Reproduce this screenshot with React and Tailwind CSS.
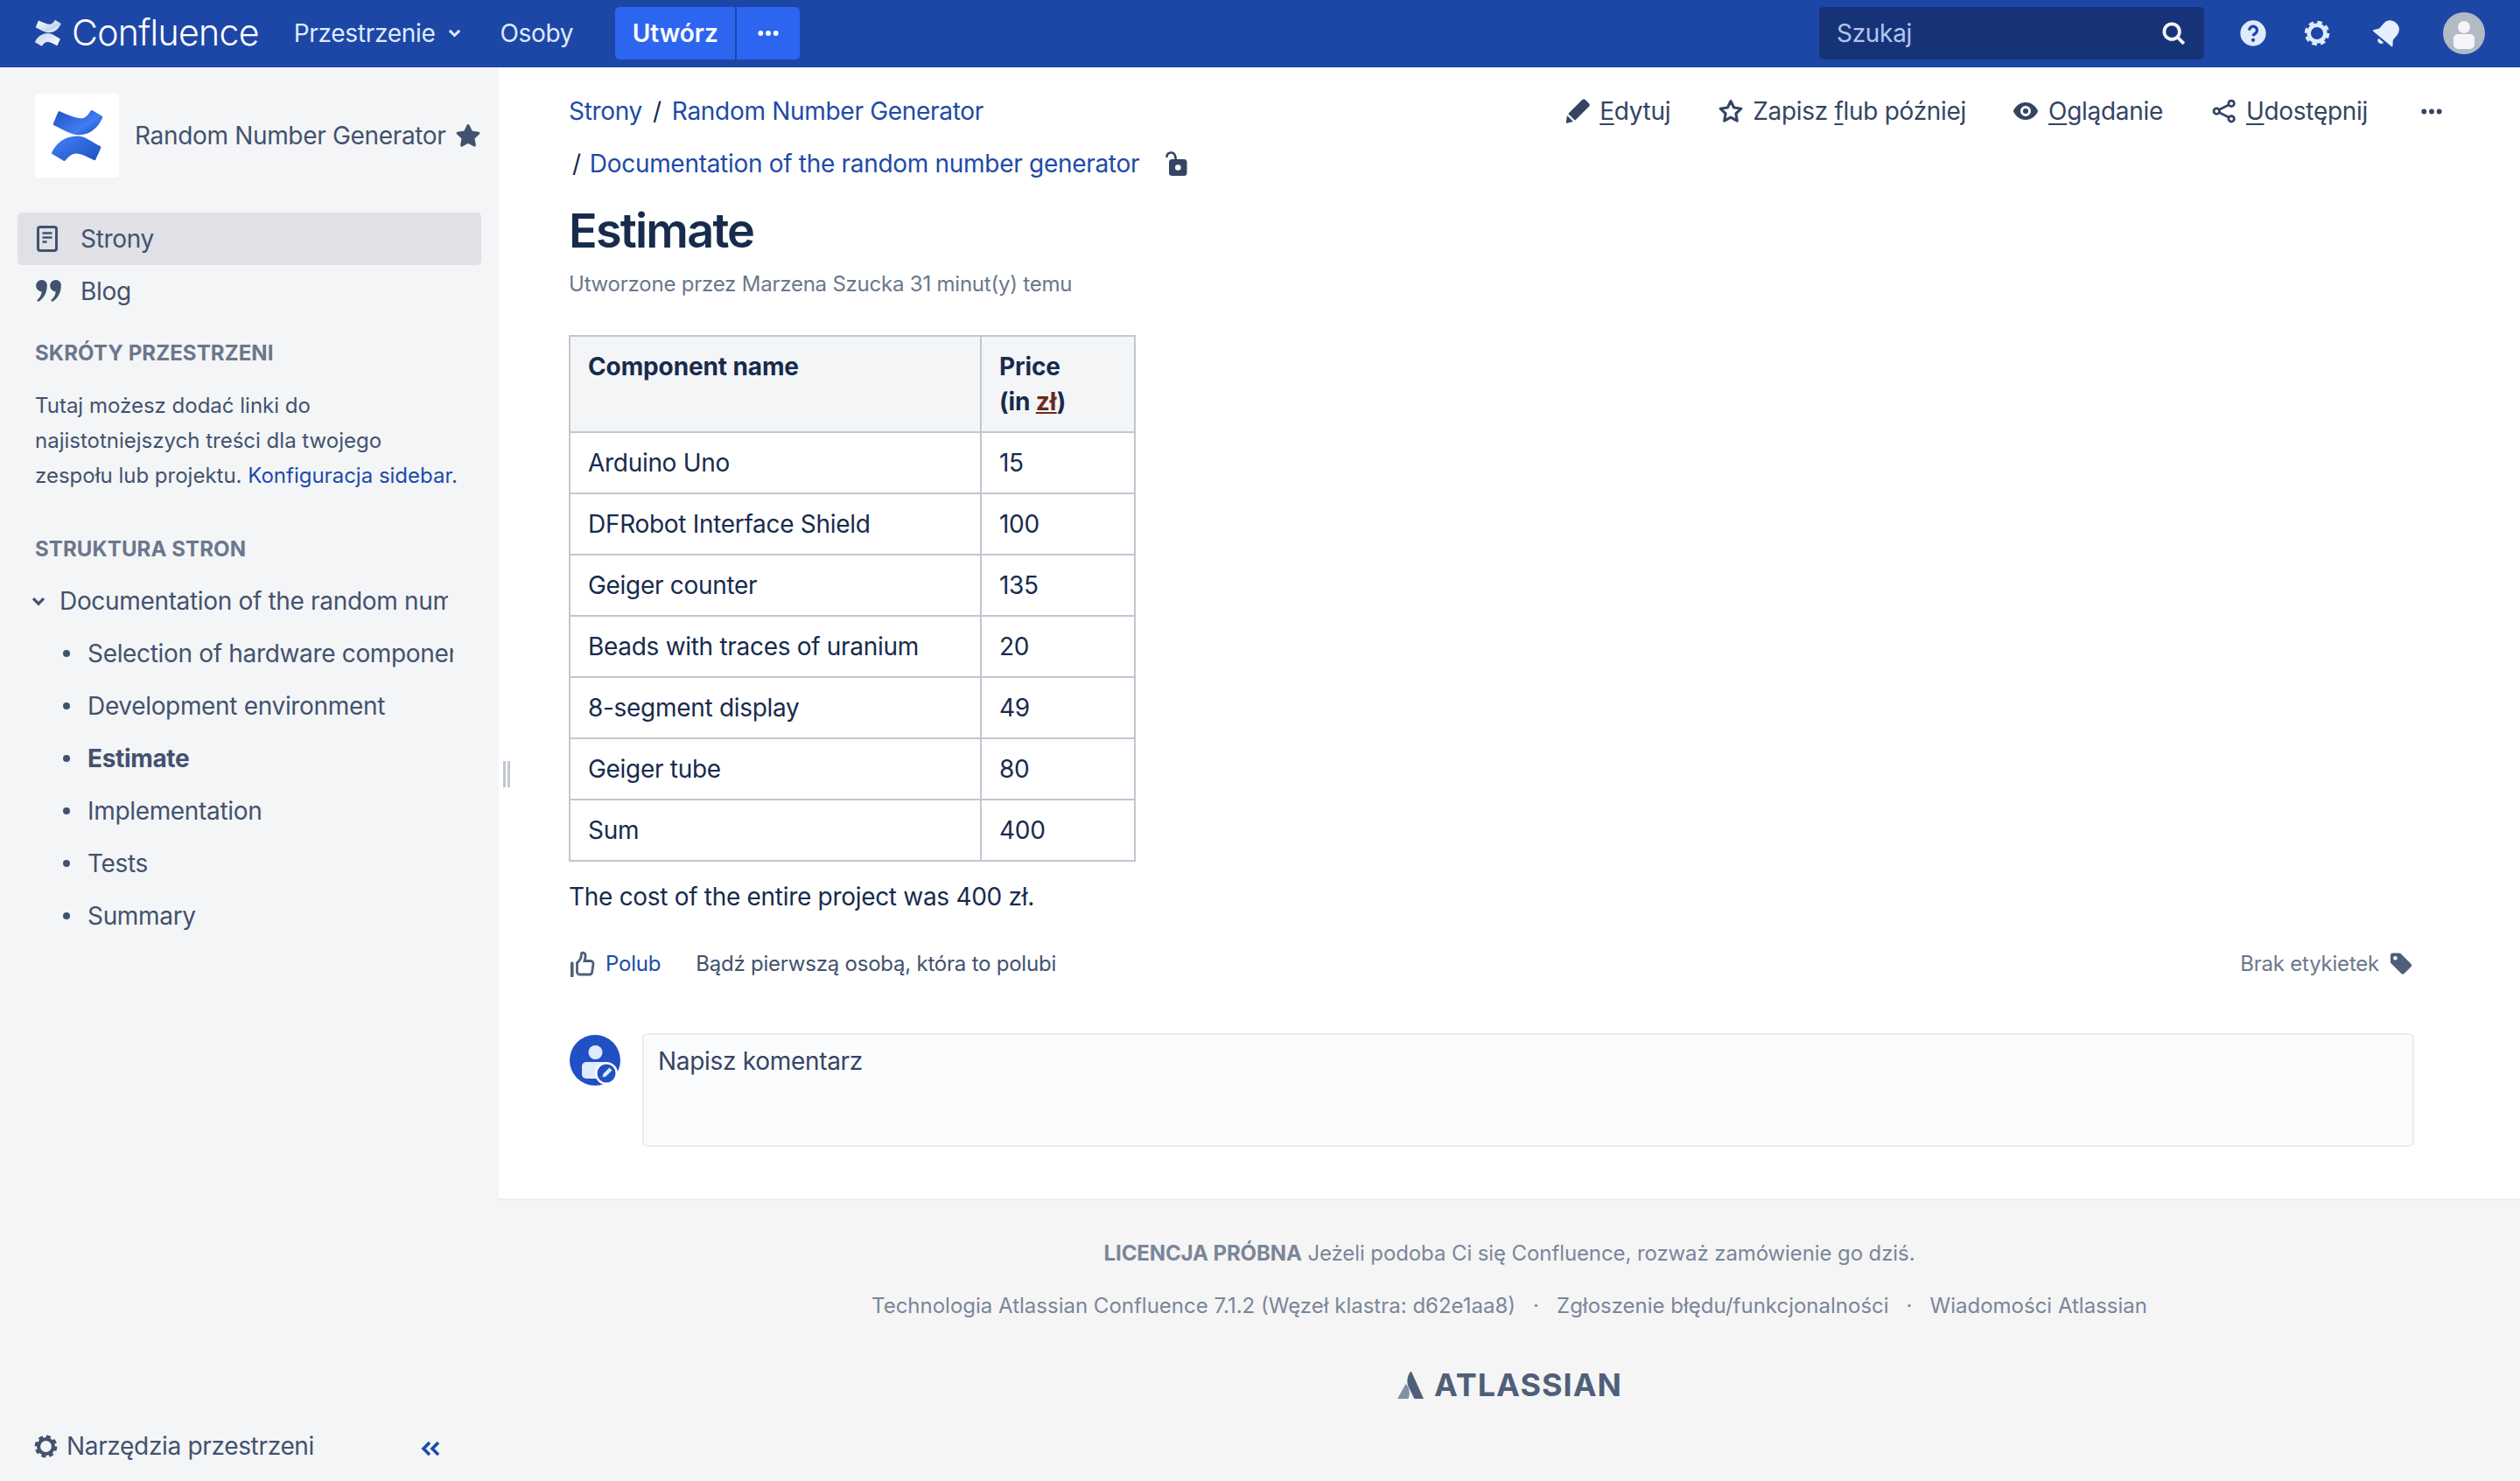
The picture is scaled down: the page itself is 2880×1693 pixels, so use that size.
import { useId } from "react";

const font = { fontFamily: "Inter, 'Noto Sans', sans-serif" };

function ConfluenceMark({ className, dark, light }) {
  const topId = useId();
  const bottomId = useId();
  return (
    <svg viewBox="50 50 190 190" className={className}>
      <defs>
        <linearGradient id={topId} x1="0" y1="0" x2="1" y2="0.8">
          <stop offset="0" stopColor={dark} />
          <stop offset="0.7" stopColor={light} />
          <stop offset="1" stopColor={dark} />
        </linearGradient>
        <linearGradient id={bottomId} x1="0" y1="0.2" x2="1" y2="1">
          <stop offset="0" stopColor={light} />
          <stop offset="1" stopColor={dark} />
        </linearGradient>
      </defs>
      <path
        fill={`url(#${topId})`}
        d="M84 60C110 72 140 84 158 84C172 84 182 72 190 58Q193 54 197 57L229 76Q233 79 231 83C216 115 190 141 150 141C122 141 95 122 64 108Q60 106 62 101L78 63Q80 58 84 60Z"
      />
      <path
        fill={`url(#${bottomId})`}
        d="M57 201C72 170 100 146 145 145C170 145 195 165 223 180Q227 182 226 186L208 226Q206 230 202 228C180 218 160 205 140 205C125 205 113 218 104 229Q101 233 97 230L58 207Q54 205 57 201Z"
      />
    </svg>
  );
}

function DotsIcon({ className }) {
  return (
    <svg viewBox="0 0 24 6" className={className} fill="currentColor">
      <circle cx="4" cy="3" r="2.7" />
      <circle cx="12" cy="3" r="2.7" />
      <circle cx="20" cy="3" r="2.7" />
    </svg>
  );
}

function GearIcon({ className }) {
  return (
    <svg viewBox="0 0 24 24" className={className} fill="none" stroke="currentColor">
      <circle cx="12" cy="12" r="7" strokeWidth="3.4" />
      <circle cx="12" cy="12" r="9.4" strokeWidth="2.6" strokeDasharray="4.2 3.18" />
    </svg>
  );
}

function PencilIcon({ className }) {
  return (
    <svg viewBox="0 0 24 24" className={className} fill="currentColor">
      <path d="M16.2 1.600a2 2 0 012.8 0l3.400 3.400a2 2 0 010 2.800L9.600 20.600 3.400 14.400zM2.400 16l5.600 5.600-5.800 1.400a.7.7 0 01-.8-.8z" />
    </svg>
  );
}

function StarIcon({ className, filled }) {
  return (
    <svg viewBox="0 0 24 24" className={className} fill={filled ? "currentColor" : "none"} stroke="currentColor" strokeWidth="2.4" strokeLinejoin="round">
      <path d="M12 2.800l2.900 6 6.600.900-4.800 4.600 1.200 6.600-5.900-3.200-5.900 3.200 1.200-6.600-4.800-4.600 6.600-.900z" />
    </svg>
  );
}

function EyeIcon({ className }) {
  return (
    <svg viewBox="0 0 24 24" className={className}>
      <path fill="currentColor" fillRule="evenodd" d="M12 4.500c5 0 9 3.600 10.600 7.500C21 15.900 17 19.500 12 19.500S3 15.900 1.400 12C3 8.100 7 4.500 12 4.500zM12 7.500a4.500 4.500 0 100 9 4.500 4.500 0 000-9z" />
      <circle cx="12" cy="12" r="2.300" fill="currentColor" />
    </svg>
  );
}

function ShareIcon({ className }) {
  return (
    <svg viewBox="0 0 24 24" className={className} fill="none" stroke="currentColor" strokeWidth="2.2">
      <circle cx="18.500" cy="5" r="2.600" />
      <circle cx="18.500" cy="19" r="2.600" />
      <circle cx="5" cy="12" r="2.600" />
      <path d="M7.300 10.800l9-4.600M7.300 13.200l9 4.600" />
    </svg>
  );
}

function HeaderIcons() {
  return (
    <div className="flex items-center">
      <svg viewBox="0 0 24 24" className="ml-[40px] h-[32px] w-[32px] text-[#deebff]">
        <circle cx="12" cy="12" r="11" fill="currentColor" />
        <path d="M8.800 9.500a3.300 3.300 0 116 1.800c-.8 1-2.400 1.500-2.800 3" fill="none" stroke="#1d47a6" strokeWidth="2.500" />
        <circle cx="12" cy="17.900" r="1.600" fill="#1d47a6" />
      </svg>
      <GearIcon className="ml-[41px] h-[32px] w-[32px] text-[#deebff]" />
      <svg viewBox="0 0 24 24" className="ml-[46px] h-[36px] w-[36px] text-[#e6eeff]" fill="currentColor">
        <g transform="rotate(40 12 12)">
          <path d="M12 1.500c4.500 0 6.800 3.200 6.800 7v4.500l2.700 3.600a.6.6 0 01-.5 1H3a.6.6 0 01-.5-1L5.200 13V8.500c0-3.800 2.300-7 6.800-7z" />
          <path d="M9.500 19h5a2.500 2.500 0 01-5 0z" />
        </g>
      </svg>
      <svg viewBox="0 0 48 48" className="ml-[46px] mr-[40px] h-[48px] w-[48px]">
        <circle cx="24" cy="24" r="24" fill="#b3bac5" />
        <circle cx="24" cy="17" r="7" fill="#f4f5f7" />
        <rect x="12" y="25" width="24" height="17" rx="5" fill="#f4f5f7" />
      </svg>
    </div>
  );
}

function TopBar() {
  return (
    <header className="flex h-[77px] items-center bg-[#1d47a6] pb-[2px] text-[28px] tracking-[-0.3px] text-[#deebff]">
      <ConfluenceMark className="ml-[39px] h-[32px] w-[32px]" dark="#ffffff" light="#c6d4f2" />
      <span className="ml-[11px] text-[41px] leading-none font-light tracking-[-0.7px] text-white">Confluence</span>
      <span className="ml-[40px]">Przestrzenie</span>
      <svg viewBox="0 0 12 8" className="ml-[15px] h-[10px] w-[15px]" fill="none" stroke="currentColor" strokeWidth="2.400">
        <path d="M1.500 1.500L6 6l4.500-4.500" />
      </svg>
      <span className="ml-[44px]">Osoby</span>
      <div className="ml-[48px] flex h-[60px] overflow-hidden rounded-[5px] bg-[#2c66f0] tracking-normal text-white">
        <span className="flex w-[137px] items-center justify-center font-semibold">Utwórz</span>
        <span className="flex w-[74px] items-center justify-center border-l-2 border-[#1d47a6]">
          <DotsIcon className="h-[8px] w-[26px]" />
        </span>
      </div>
      <div className="ml-auto flex h-[60px] w-[440px] items-center justify-between rounded-[5px] bg-[#173378] px-[20px] text-[#b3c6ef]">
        <span>Szukaj</span>
        <svg viewBox="0 0 24 24" className="h-[30px] w-[30px] text-[#f4f6fc]" fill="none" stroke="currentColor" strokeWidth="3">
          <circle cx="10.500" cy="10.500" r="7" />
          <path d="M15.500 15.500l6 6" />
        </svg>
      </div>
      <HeaderIcons />
    </header>
  );
}

function SideItem({ icon, label, active }) {
  return (
    <div className={"mx-[20px] flex h-[60px] w-[530px] items-center rounded-[5px] " + (active ? "bg-[#dfe1e6]" : "")}>
      <span className="flex w-[72px] justify-center pr-[4px]">{icon}</span>
      {label}
    </div>
  );
}

const childPages = ["Selection of hardware components", "Development environment", "Estimate", "Implementation", "Tests", "Summary"];

function Sidebar() {
  return (
    <aside className="flex w-[570px] shrink-0 flex-col bg-[#f4f5f7] pt-[30px] text-[28px] tracking-[-0.33px] text-[#42526e]">
      <div className="ml-[40px] flex items-center">
        <div className="flex h-[96px] w-[96px] items-center justify-center rounded-[4px] bg-white">
          <ConfluenceMark className="h-[63px] w-[63px]" dark="#1f4fc0" light="#3f7df2" />
        </div>
        <span className="ml-[18px]">Random Number Generator</span>
        <StarIcon className="ml-[10px] h-[30px] w-[30px]" filled />
      </div>
      <div className="mt-[40px]">
        <SideItem
          active
          label="Strony"
          icon={
            <svg viewBox="0 0 24 30" className="h-[30px] w-[24px]" fill="none" stroke="currentColor" strokeWidth="3">
              <rect x="1.500" y="1.500" width="21" height="27" rx="2.500" />
              <path d="M6.500 8.500h11M6.500 13.500h11M6.500 18.500h5" strokeWidth="2.500" />
            </svg>
          }
        />
        <SideItem
          label="Blog"
          icon={
            <svg viewBox="0 0 30 26" className="ml-[3px] h-[26px] w-[30px]" fill="currentColor">
              <path d="M7 0a6 6 0 015.800 6.500C12.800 15 8.500 22 2.500 25l-1.200-2C4.500 20.500 6.300 17 6.700 13.400A6.700 6.700 0 017 0zM23 0a6 6 0 015.800 6.500C28.800 15 24.500 22 18.500 25l-1.200-2c3.200-2.500 5-6 5.400-9.600A6.700 6.700 0 0123 0z" />
            </svg>
          }
        />
      </div>
      <h3 className="mt-[25px] ml-[40px] text-[24px] leading-[32px] font-bold tracking-[0.1px] text-[#6b778c]">SKRÓTY PRZESTRZENI</h3>
      <p className="mt-[24px] ml-[40px] w-[510px] text-[24px] leading-[40px] tracking-normal">
        Tutaj możesz dodać linki do
        <br />
        najistotniejszych treści dla twojego
        <br />
        zespołu lub projektu. <span className="text-[#1d4ba8]">Konfiguracja sidebar</span>.
      </p>
      <h3 className="mt-[48px] ml-[40px] text-[24px] leading-[32px] font-bold tracking-[0.1px] text-[#6b778c]">STRUKTURA STRON</h3>
      <div className="mt-[13px]">
        <div className="flex h-[60px] items-center pl-[36px]">
          <svg viewBox="0 0 12 8" className="h-[11px] w-[16px]" fill="none" stroke="currentColor" strokeWidth="2.400">
            <path d="M1.500 1.500L6 6l4.500-4.500" />
          </svg>
          <span className="ml-[16px] w-[444px] overflow-hidden whitespace-nowrap">Documentation of the random number generator</span>
        </div>
        {childPages.map((page) => (
          <div key={page} className="flex h-[60px] items-center pl-[72px]">
            <span className="h-[8px] w-[8px] rounded-full bg-[#42526e]" />
            <span className={"ml-[20px] w-[418px] overflow-hidden whitespace-nowrap " + (page === "Estimate" ? "font-bold" : "")}>{page}</span>
          </div>
        ))}
      </div>
      <div className="mt-auto mb-[20px] flex h-[40px] items-center pl-[38px]">
        <GearIcon className="h-[29px] w-[29px]" />
        <span className="ml-[9px]">Narzędzia przestrzeni</span>
        <svg viewBox="0 0 22 18" className="mt-[6px] ml-[122px] h-[18px] w-[22px] text-[#1d4ba8]" fill="none" stroke="currentColor" strokeWidth="3.600">
          <path d="M10 2L3 9l7 7M20 2l-7 7 7 7" />
        </svg>
      </div>
    </aside>
  );
}

function Action({ icon, first, rest, before, className }) {
  return (
    <span className={"flex items-center " + className}>
      {icon}
      <span className="ml-[10px]">
        {before}
        <span className="underline underline-offset-[4px]">{first}</span>
        {rest}
      </span>
    </span>
  );
}

const rows = [
  ["Arduino Uno", "15"],
  ["DFRobot Interface Shield", "100"],
  ["Geiger counter", "135"],
  ["Beads with traces of uranium", "20"],
  ["8-segment display", "49"],
  ["Geiger tube", "80"],
  ["Sum", "400"],
];

function PriceTable() {
  return (
    <table className="mt-[42px] w-[648px] table-fixed border-collapse border-2 border-[#c1c7d0] text-[28px] leading-[40px] text-[#172b4d]">
      <thead>
        <tr className="bg-[#f4f5f7] align-top tracking-[-0.12px]">
          <th className="w-[470px] border-2 border-[#c1c7d0] px-[20px] pt-[14px] pb-[14px] text-left font-bold">Component name</th>
          <th className="border-2 border-[#c1c7d0] px-[20px] pt-[14px] pb-[14px] text-left font-bold">
            Price
            <br />
            (in <span className="text-[#6b2a1a] underline">zł</span>)
          </th>
        </tr>
      </thead>
      <tbody>
        {rows.map(([name, price]) => (
          <tr key={name} className="h-[70px]">
            <td className="border-2 border-[#c1c7d0] px-[20px]">{name}</td>
            <td className="border-2 border-[#c1c7d0] px-[20px]">{price}</td>
          </tr>
        ))}
      </tbody>
    </table>
  );
}

function PageContent() {
  return (
    <div className="relative pt-[30px] pr-[121px] pb-[59px] pl-[80px] text-[28px] leading-[40px] tracking-[-0.3px]">
      <div className="flex justify-between">
        <div className="text-[#172b4d]">
          <span className="text-[#1d4ba8]">Strony</span>
          <span className="mx-[12px]">/</span>
          <span className="text-[#1d4ba8]">Random Number Generator</span>
        </div>
        <div className="mr-[-33px] flex items-center text-[#344563]">
          <Action icon={<PencilIcon className="h-[30px] w-[30px]" />} first="E" rest="dytuj" />
          <Action className="ml-[54px]" icon={<StarIcon className="h-[30px] w-[30px]" />} before="Zapisz " first="f" rest="lub później" />
          <Action className="ml-[52px]" icon={<EyeIcon className="h-[32px] w-[32px]" />} first="O" rest="glądanie" />
          <Action className="ml-[55px]" icon={<ShareIcon className="h-[30px] w-[30px]" />} first="U" rest="dostępnij" />
          <DotsIcon className="ml-[60px] h-[7px] w-[26px]" />
        </div>
      </div>
      <div className="mt-[20px] flex items-center text-[#172b4d]">
        <span className="ml-[4px]">/</span>
        <span className="ml-[10px] text-[#1d4ba8]">Documentation of the random number generator</span>
        <svg viewBox="10 10 28 34" className="ml-[28px] h-[34px] w-[28px] text-[#344563]">
          <rect x="16" y="22" width="20.500" height="19" rx="3.500" fill="currentColor" />
          <circle cx="26.300" cy="31.500" r="3.300" fill="#fff" />
          <path d="M13.500 19c.5-5.500 8.500-6.500 9.800 0l.4 3.500" fill="none" stroke="currentColor" strokeWidth="2.600" strokeLinecap="round" />
        </svg>
      </div>
      <h1 className="mt-[25px] text-[54px] leading-[64px] font-semibold tracking-[-1.8px] text-[#172b4d]">Estimate</h1>
      <p className="mt-[13px] text-[24px] leading-[32px] tracking-[-0.22px] text-[#6b778c]">Utworzone przez Marzena Szucka 31 minut(y) temu</p>
      <PriceTable />
      <p className="mt-[20px] text-[#172b4d]">The cost of the entire project was 400 zł.</p>
      <div className="mt-[37px] flex items-center text-[24px] tracking-[-0.22px]">
        <svg viewBox="0 0 28 30" className="ml-[2px] h-[30px] w-[28px] text-[#505f79]" fill="none" stroke="currentColor" strokeWidth="2.800">
          <path d="M1.800 14v14.500" strokeWidth="3.600" strokeLinecap="round" />
          <path d="M7.500 13.500c3-2 5-6 5-10.500 0-1.500 4-1.500 4.500 2 .3 2-.5 5-1 6.500h7a3 3 0 013 3.500l-1.400 9.500a3 3 0 01-3 2.500H10.500a3 3 0 01-3-3z" />
        </svg>
        <span className="ml-[12px] text-[#1d4ba8]">Polub</span>
        <span className="ml-[40px] text-[#42526e]">Bądź pierwszą osobą, która to polubi</span>
        <span className="ml-auto text-[#6b778c]">Brak etykietek</span>
        <svg viewBox="0 0 26 26" className="mr-[2px] ml-[12px] h-[26px] w-[26px] text-[#505f79]" fill="currentColor">
          <path fillRule="evenodd" d="M3 .500h8a3 3 0 012.100.900l11 11a3 3 0 010 4.200l-7 7a3 3 0 01-4.200 0l-11-11A3 3 0 011 10.500V3a2.500 2.500 0 012-2.500zM6.500 4a2.300 2.300 0 100 4.600 2.300 2.300 0 000-4.600z" />
        </svg>
      </div>
      <div className="mt-[59px] flex items-start">
        <svg viewBox="0 0 58 58" className="mt-[2px] ml-px h-[58px] w-[58px] shrink-0">
          <circle cx="29" cy="29" r="29" fill="#2050c4" />
          <circle cx="29.500" cy="20" r="8" fill="#deebff" />
          <path d="M14 36a5 5 0 015-5h20a5 5 0 015 5v14H19a5 5 0 01-5-5z" fill="#deebff" />
          <circle cx="42" cy="44" r="13" fill="#fff" />
          <circle cx="42" cy="44" r="10.500" fill="#2050c4" />
          <path d="M45.500 37.500l3 3-7 7-4 1 1-4z" fill="#deebff" />
        </svg>
        <div className="ml-[25px] h-[130px] flex-1 rounded-[6px] border-2 border-[#ebecf0] bg-[#fafbfc] px-[16px] pt-[10px] text-[#344563]">Napisz komentarz</div>
      </div>
      <div className="absolute top-[793px] left-[5px] flex gap-[2px]">
        <span className="h-[30px] w-[3px] bg-[#c1c7d0]" />
        <span className="h-[30px] w-[3px] bg-[#c1c7d0]" />
      </div>
    </div>
  );
}

function Footer() {
  return (
    <footer className="flex flex-1 flex-col items-center border-t-2 border-[#ebecf0] bg-[#f5f5f5] pt-[45px] text-[24px] leading-[32px] text-[#7a869a]">
      <p className="tracking-[-0.1px]">
        <span className="font-bold">LICENCJA PRÓBNA</span> Jeżeli podoba Ci się Confluence, rozważ zamówienie go dziś.
      </p>
      <p className="mt-[28px] flex">
        <span>Technologia Atlassian Confluence 7.1.2 (Węzeł klastra: d62e1aa8)</span>
        <span className="mx-[20px]">·</span>
        <span>Zgłoszenie błędu/funkcjonalności</span>
        <span className="mx-[20px]">·</span>
        <span>Wiadomości Atlassian</span>
      </p>
      <div className="mt-[52px] flex items-center">
        <svg viewBox="0 0 32 32" className="h-[33px] w-[32px]">
          <path d="M11.500 15.500c-.5-.6-1.200-.5-1.600.2L1 31.500h11.500c.5 0 1-.3 1.200-.7 2.300-4.700.9-11.700-2.200-15.300z" fill="#8590a2" />
          <path d="M15.500 1c-3.800 6-4 12.500-1.500 17.500l6 12.300c.2.500.700.700 1.200.700h9.800L17.300 1c-.4-.7-1.400-.7-1.800 0z" fill="#505f79" />
        </svg>
        <span className="ml-[11px] text-[36px] leading-[44px] font-bold tracking-[1px] text-[#505f79]">ATLASSIAN</span>
      </div>
    </footer>
  );
}

export default function App() {
  return (
    <div className="flex h-[1693px] flex-col bg-white" style={font}>
      <TopBar />
      <div className="flex flex-1">
        <Sidebar />
        <main className="flex flex-1 flex-col">
          <PageContent />
          <Footer />
        </main>
      </div>
    </div>
  );
}
